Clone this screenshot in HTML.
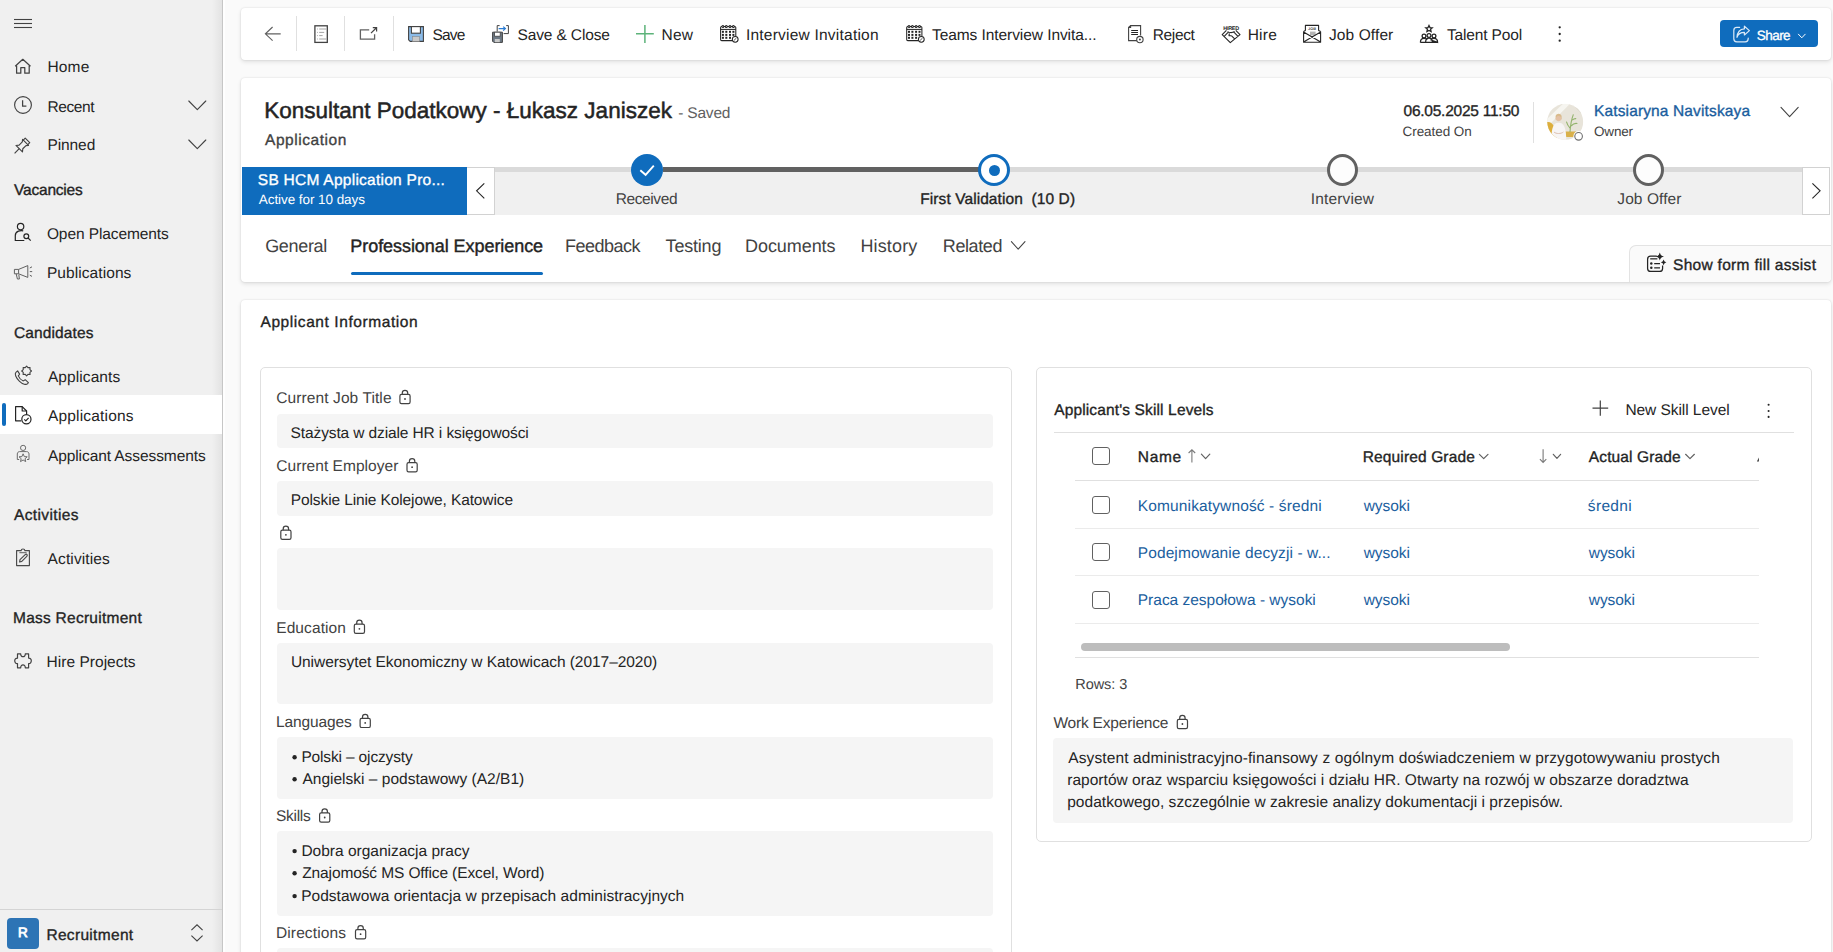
<!DOCTYPE html>
<html><head><meta charset="utf-8"><title>Application</title>
<style>
html,body{margin:0;padding:0}
body{width:1833px;height:952px;overflow:hidden;position:relative;background:#fafafa;font-family:"Liberation Sans",sans-serif;color:#242424;text-rendering:geometricPrecision}
.b{position:absolute}
.t{position:absolute;white-space:pre}
</style></head><body>
<div class="b" style="left:0px;top:0px;width:222px;height:952px;background:#f0f0f0"></div><div class="b" style="left:212px;top:0px;width:10px;height:952px;background:linear-gradient(90deg,rgba(0,0,0,0),rgba(0,0,0,0.055))"></div><div class="b" style="left:222px;top:0px;width:1px;height:952px;background:#c6c6c6"></div><div class="b" style="left:223px;top:0px;width:2px;height:952px;background:#fefefe"></div><div class="b" style="left:0px;top:395px;width:222px;height:39px;background:#ffffff"></div><div class="b" style="left:2px;top:403px;width:4px;height:23px;background:#0f6cbd;border-radius:2px"></div><div class="b" style="left:0px;top:909px;width:222px;height:1px;background:#d4d4d4"></div><div class="b" style="left:7px;top:918px;width:32px;height:31px;background:#2d74b5;border-radius:4px"></div><div class="b" style="left:241px;top:8px;width:1590px;height:52px;background:#fff;border-radius:4px;box-shadow:0 0 2px rgba(0,0,0,0.12),0 2px 4px rgba(0,0,0,0.10)"></div><div class="b" style="left:296px;top:16px;width:1px;height:35px;background:#e0e0e0"></div><div class="b" style="left:344px;top:16px;width:1px;height:35px;background:#e0e0e0"></div><div class="b" style="left:393px;top:16px;width:1px;height:35px;background:#e0e0e0"></div><div class="b" style="left:1720px;top:20px;width:98px;height:27px;background:#0f6cbd;border-radius:4px"></div><div class="b" style="left:241px;top:78px;width:1590px;height:204px;background:#fff;border-radius:4px;box-shadow:0 0 2px rgba(0,0,0,0.12),0 2px 4px rgba(0,0,0,0.10)"></div><div class="b" style="left:242px;top:167px;width:225px;height:48px;background:#0f6cbd"></div><div class="b" style="left:467px;top:167px;width:28px;height:48px;background:#fff;border:1px solid #d2d2d2;border-left:none;box-sizing:border-box"></div><div class="b" style="left:495px;top:167px;width:1307px;height:48px;background:#f0f0f0"></div><div class="b" style="left:495px;top:167px;width:1307px;height:5px;background:#dadada"></div><div class="b" style="left:663px;top:167px;width:316px;height:5px;background:#616161"></div><div class="b" style="left:1802px;top:167px;width:28px;height:48px;background:#fff;border:1px solid #d2d2d2;box-sizing:border-box"></div><div class="b" style="left:1533px;top:102px;width:1px;height:41px;background:#e0e0e0"></div><div class="b" style="left:631px;top:154px;width:32px;height:32px;background:#0f6cbd;border-radius:50%"></div><div class="b" style="left:978px;top:154px;width:32px;height:32px;background:#fff;border:3.7px solid #0f6cbd;border-radius:50%;box-sizing:border-box"></div><div class="b" style="left:988.5px;top:164.5px;width:11.0px;height:11.0px;background:#0f6cbd;border-radius:50%"></div><div class="b" style="left:1327px;top:154px;width:31px;height:32px;background:#fdfdfd;border:3.5px solid #616161;border-radius:50%;box-sizing:border-box"></div><div class="b" style="left:1633px;top:154px;width:31px;height:32px;background:#fdfdfd;border:3.5px solid #616161;border-radius:50%;box-sizing:border-box"></div><div class="b" style="left:351px;top:272px;width:192px;height:3px;background:#0f6cbd;border-radius:2px"></div><div class="b" style="left:1629px;top:245px;width:202px;height:37px;background:#fafafa;border:1px solid #e3e3e3;border-right:none;border-bottom:none;border-top-left-radius:7px;border-bottom-right-radius:5px;box-sizing:border-box"></div><div class="b" style="left:241px;top:300px;width:1590px;height:680px;background:#fff;border-radius:4px;box-shadow:0 0 2px rgba(0,0,0,0.12),0 2px 4px rgba(0,0,0,0.10)"></div><div class="b" style="left:260px;top:367px;width:752px;height:633px;border:1px solid #e0e0e0;border-radius:5px;box-sizing:border-box"></div><div class="b" style="left:277px;top:414px;width:716px;height:34px;background:#f5f5f5;border-radius:4px"></div><div class="b" style="left:277px;top:481px;width:716px;height:35px;background:#f5f5f5;border-radius:4px"></div><div class="b" style="left:277px;top:548px;width:716px;height:62px;background:#f5f5f5;border-radius:4px"></div><div class="b" style="left:277px;top:643px;width:716px;height:61px;background:#f5f5f5;border-radius:4px"></div><div class="b" style="left:277px;top:737px;width:716px;height:62px;background:#f5f5f5;border-radius:4px"></div><div class="b" style="left:277px;top:831px;width:716px;height:85px;background:#f5f5f5;border-radius:4px"></div><div class="b" style="left:277px;top:948px;width:716px;height:52px;background:#f5f5f5;border-radius:4px"></div><div class="b" style="left:1036px;top:367px;width:776px;height:475px;border:1px solid #e0e0e0;border-radius:5px;box-sizing:border-box"></div><div class="b" style="left:1054px;top:432px;width:740px;height:1px;background:#e0e0e0"></div><div class="b" style="left:1075px;top:480px;width:684px;height:1px;background:#e0e0e0"></div><div class="b" style="left:1075px;top:528px;width:684px;height:1px;background:#ebebeb"></div><div class="b" style="left:1075px;top:575px;width:684px;height:1px;background:#ebebeb"></div><div class="b" style="left:1075px;top:623px;width:684px;height:1px;background:#ebebeb"></div><div class="b" style="left:1081px;top:643px;width:429px;height:8px;background:#bdbdbd;border-radius:4px"></div><div class="b" style="left:1075px;top:657px;width:684px;height:1px;background:#e0e0e0"></div><div class="b" style="left:1053px;top:738px;width:740px;height:85px;background:#f5f5f5;border-radius:4px"></div><div class="b" style="left:1092px;top:447px;width:18px;height:18px;border:1px solid #616161;border-radius:3px;box-sizing:border-box;background:#fff"></div><div class="b" style="left:1092px;top:496px;width:18px;height:18px;border:1px solid #616161;border-radius:3px;box-sizing:border-box;background:#fff"></div><div class="b" style="left:1092px;top:543px;width:18px;height:18px;border:1px solid #616161;border-radius:3px;box-sizing:border-box;background:#fff"></div><div class="b" style="left:1092px;top:591px;width:18px;height:18px;border:1px solid #616161;border-radius:3px;box-sizing:border-box;background:#fff"></div>
<svg class="b" style="left:0;top:0" width="1833" height="952" viewBox="0 0 1833 952"><path d="M14 19.5 H32" stroke="#424242" stroke-width="1.1"/><path d="M14 23.5 H32" stroke="#424242" stroke-width="1.1"/><path d="M14 27.5 H32" stroke="#424242" stroke-width="1.1"/><path d="M15.2 66.2 L22.8 59.3 L30.5 66.2 M16.6 64.8 V73.2 H20.8 V67.6 H24.8 V73.2 H29.2 V64.8" stroke="#424242" stroke-width="1.25" fill="none" stroke-linejoin="round"/><circle cx="23" cy="105" r="8.4" stroke="#424242" stroke-width="1.15" fill="none"/><path d="M22.6 100.3 V106.2 H26.4" stroke="#424242" stroke-width="1.25" fill="none"/><g transform="translate(14.6,153.3) rotate(-45)" stroke="#424242" stroke-width="1.15" fill="none" stroke-linejoin="round"><path d="M0 0 H6.5"/><path d="M6.5 -4.6 V4.6 L9 2.6 H13.5 L15.5 4.2 V-4.2 L13.5 -2.6 H9 Z"/><path d="M15.5 -3.2 H18.2 V3.2 H15.5"/></g><path d="M188.8 101 L197.3 109.6 L205.8 101" stroke="#424242" stroke-width="1.1" fill="none" stroke-linecap="round" stroke-linejoin="round"/><path d="M188.8 140 L197.3 148.6 L205.8 140" stroke="#424242" stroke-width="1.1" fill="none" stroke-linecap="round" stroke-linejoin="round"/><g stroke="#242424" stroke-width="1.2" fill="none"><circle cx="20.6" cy="226.6" r="3.2"/><path d="M23.2 230.9 C21 230.4 15.3 230.6 15.3 235.6 V240.5 H24.3"/><circle cx="26.3" cy="236.2" r="2.4"/><path d="M28.1 238 L30.7 240.6"/></g><g stroke="#616161" stroke-width="1" fill="none" stroke-linejoin="round"><rect x="14.4" y="269.4" width="4.2" height="4.4"/><path d="M18.6 269.4 L27.8 265.6 V277.4 L18.6 273.8"/><path d="M16.2 273.8 L17.4 279 H19.4 L18.8 274.6"/><path d="M29.8 268 L32 266.8 M29.8 271.6 H32.2 M29.8 275.2 L32 276.4"/></g><g stroke="#424242" stroke-width="1.1" fill="none" stroke-linejoin="round"><path d="M17.6 370.9 L15.9 372.3 C14.4 373.8 15.8 377.6 19.3 381.1 C22.8 384.6 26.4 385 27.6 383.6 L28.4 382.6 L25.2 379.7 L23.3 380.9 C21.6 380.2 18.9 377.5 18.3 375.9 L19.6 374.1 Z"/><polygon points="31.50,371.00 29.93,372.38 30.06,374.46 27.98,374.33 26.60,375.90 25.22,374.33 23.14,374.46 23.27,372.38 21.70,371.00 23.27,369.62 23.14,367.54 25.22,367.67 26.60,366.10 27.98,367.67 30.06,367.54 29.93,369.62"/></g><g stroke="#242424" stroke-width="1.2" fill="none" stroke-linejoin="round"><path d="M21.3 420.8 H15.6 V406.6 H22.2 L26.6 411 V414.2"/><path d="M22.2 406.6 V411 H26.6"/><circle cx="26.4" cy="419.3" r="4.6"/><path d="M24.3 419.4 L25.8 420.9 L28.6 417.9"/></g><g stroke="#6b6b6b" stroke-width="1" fill="none" stroke-linejoin="round"><circle cx="23.1" cy="447.9" r="2.6"/><path d="M19.6 451.6 H26.6 C28 451.6 29 452.6 29 454 V459.5 H27 M19.2 459.5 H17.3 V454 C17.3 452.6 18.3 451.6 19.6 451.6"/><path d="M23.1 453.8 L24.3 456.6 L27.2 456.8 L25 458.7 L25.7 461.6 L23.1 460 L20.5 461.6 L21.2 458.7 L19 456.8 L21.9 456.6 Z"/></g><g stroke="#4a4a4a" stroke-width="1.15" fill="none" stroke-linejoin="round"><path d="M16.6 550.6 H21.2 C21.2 548.4 24.8 548.4 24.8 550.6 H29.4 V565.6 H16.6 Z"/><path d="M19.4 552.6 H26.6" stroke-width="1.3" stroke="#7a7a7a"/><path d="M19.6 562 L20 559.6 L25.2 554.6 C25.8 554 26.6 554 27 554.6 C27.4 555.2 27.4 555.8 26.8 556.4 L21.8 561.4 Z"/></g><path d="M17.5 653.9 H20.7 C20.5 657.6 25.5 657.6 25.3 653.9 H28.6 V658.1 C32.2 657.9 32.2 663.8 28.6 663.6 V667.8 H25.3 C25.5 663.9 20.5 663.9 20.7 667.8 H17.5 V663.6 C13.8 663.8 13.8 657.9 17.5 658.1 Z" stroke="#424242" stroke-width="1.2" fill="none" stroke-linejoin="round"/><path d="M191.4 930.2 L197 924.8 L202.6 930.2 M191.4 935.6 L197 941 L202.6 935.6" stroke="#424242" stroke-width="1.1" fill="none"/><path d="M272.6 27 L265.4 33.8 L272.6 40.6 M265.6 33.8 H280.7" stroke="#616161" stroke-width="1.15" fill="none"/><rect x="314.9" y="25.8" width="12.4" height="16.6" stroke="#424242" stroke-width="1.3" fill="#fff"/><path d="M317.2 29 H318 M319.2 29 H326.2" stroke="#9a9a9a" stroke-width="0.9"/><path d="M317.2 32.4 H318 M319.2 32.4 H324.2" stroke="#9a9a9a" stroke-width="0.9"/><path d="M317.2 35.6 H318 M319.2 35.6 H322.59999999999997" stroke="#9a9a9a" stroke-width="0.9"/><path d="M317.2 39 H318 M319.2 39 H326.2" stroke="#9a9a9a" stroke-width="0.9"/><path d="M369.2 29.9 H360.4 V39.2 H374.6 V34.2" stroke="#616161" stroke-width="1.3" fill="none"/><path d="M371 33.2 L376.2 28 M372.8 27.6 H376.6 V31.4" stroke="#424242" stroke-width="1.2" fill="none"/><path d="M408.6 26.6 H423.4 V41.4 H410.2 L408.6 39.8 Z" fill="#8bbbe8" stroke="#424242" stroke-width="1.1"/><rect x="411.4" y="26.6" width="9" height="6.6" fill="#fff" stroke="#424242" stroke-width="1.1"/><rect x="412.4" y="36.6" width="7.2" height="4.8" fill="#c9c9c9" stroke="#8a8a8a" stroke-width="0.6"/><path d="M492.6 32.2 H502.4 V42.4 H493.8 L492.6 41.2 Z" fill="#6e7a86" stroke="#424242" stroke-width="1"/><rect x="494.6" y="32.2" width="5.6" height="4" fill="#fff" stroke="#424242" stroke-width="0.8"/><rect x="494.8" y="39" width="5" height="3.2" fill="#c9c9c9"/><path d="M497.2 31.5 V25.6 H499.6 M506.2 25.6 H508.4 V33.6 H503.6" stroke="#424242" stroke-width="1" fill="none"/><path d="M498.6 28.6 H505.2 M503.2 26.6 L505.4 28.6 L503.2 30.6" stroke="#2b7cd3" stroke-width="1.2" fill="none"/><path d="M644.9 25 V42.9 M636 33.8 H653.8" stroke="#5db37a" stroke-width="1.5"/><g transform="translate(720.1,25.9)" fill="none" stroke="#242424" stroke-width="1.05"><path d="M12.2 14.7 H1.6 C0.9 14.7 0.5 14.3 0.5 13.6 V1.6 C0.5 0.9 0.9 0.5 1.6 0.5 H14.6 C15.3 0.5 15.7 0.9 15.7 1.6 V10.6"/><path d="M0.5 3.5 H15.7"/><circle cx="2.8" cy="0.6" r="1" fill="#fff"/><circle cx="6.2" cy="0.6" r="1" fill="#fff"/><circle cx="9.9" cy="0.6" r="1" fill="#fff"/><circle cx="13.3" cy="0.6" r="1" fill="#fff"/><rect x="1.7999999999999998" y="4.9" width="2" height="2" fill="#242424" stroke="none"/><rect x="5.2" y="4.9" width="2" height="2" fill="#242424" stroke="none"/><rect x="8.9" y="4.9" width="2" height="2" fill="#242424" stroke="none"/><rect x="12.3" y="4.9" width="2" height="2" fill="#242424" stroke="none"/><rect x="1.7999999999999998" y="8.0" width="2" height="2" fill="#242424" stroke="none"/><rect x="5.2" y="8.0" width="2" height="2" fill="#242424" stroke="none"/><rect x="8.9" y="8.0" width="2" height="2" fill="#242424" stroke="none"/><rect x="12.3" y="8.0" width="2" height="2" fill="#242424" stroke="none"/><rect x="1.7999999999999998" y="10.9" width="2" height="2" fill="#242424" stroke="none"/><rect x="5.2" y="10.9" width="2" height="2" fill="#242424" stroke="none"/><rect x="8.9" y="10.9" width="2" height="2" fill="#242424" stroke="none"/><circle cx="15.1" cy="13.4" r="2.9" fill="#fff"/><path d="M13.9 14.5 L16.3 12.2" stroke-width="0.8"/></g><g transform="translate(906.2,25.9)" fill="none" stroke="#242424" stroke-width="1.05"><path d="M12.2 14.7 H1.6 C0.9 14.7 0.5 14.3 0.5 13.6 V1.6 C0.5 0.9 0.9 0.5 1.6 0.5 H14.6 C15.3 0.5 15.7 0.9 15.7 1.6 V10.6"/><path d="M0.5 3.5 H15.7"/><circle cx="2.8" cy="0.6" r="1" fill="#fff"/><circle cx="6.2" cy="0.6" r="1" fill="#fff"/><circle cx="9.9" cy="0.6" r="1" fill="#fff"/><circle cx="13.3" cy="0.6" r="1" fill="#fff"/><rect x="1.7999999999999998" y="4.9" width="2" height="2" fill="#242424" stroke="none"/><rect x="5.2" y="4.9" width="2" height="2" fill="#242424" stroke="none"/><rect x="8.9" y="4.9" width="2" height="2" fill="#242424" stroke="none"/><rect x="12.3" y="4.9" width="2" height="2" fill="#242424" stroke="none"/><rect x="1.7999999999999998" y="8.0" width="2" height="2" fill="#242424" stroke="none"/><rect x="5.2" y="8.0" width="2" height="2" fill="#242424" stroke="none"/><rect x="8.9" y="8.0" width="2" height="2" fill="#242424" stroke="none"/><rect x="12.3" y="8.0" width="2" height="2" fill="#242424" stroke="none"/><rect x="1.7999999999999998" y="10.9" width="2" height="2" fill="#242424" stroke="none"/><rect x="5.2" y="10.9" width="2" height="2" fill="#242424" stroke="none"/><rect x="8.9" y="10.9" width="2" height="2" fill="#242424" stroke="none"/><circle cx="15.1" cy="13.4" r="2.9" fill="#fff"/><path d="M13.9 14.5 L16.3 12.2" stroke-width="0.8"/></g><g fill="none" stroke="#424242" stroke-width="1.1"><path d="M1137.2 40.6 H1128.6 V27.4 L1130.6 25.6 H1140.6 V35.6"/><path d="M1128.6 27.4 H1130.6 V25.6"/><path d="M1131.2 30.5 H1138 M1131.2 32.5 H1138 M1131.2 34.5 H1138" stroke-width="1.2" stroke="#242424"/><circle cx="1139.9" cy="39.6" r="3.2" fill="#fff"/><circle cx="1139.9" cy="39.6" r="1" fill="#424242" stroke="none"/></g><g fill="none" stroke="#242424" stroke-width="1.1" stroke-linejoin="round"><text x="1231.1" y="29.7" font-size="5.4" font-family="Liberation Sans" font-weight="700" text-anchor="middle" fill="#242424" stroke="none" letter-spacing="-0.25">HIRED</text><path d="M1226.4 30.4 L1222.2 34.6 L1230.3 42.6 L1240 34.6 L1235.8 30.4 M1224.2 36.4 L1228.3 32.2 M1238 36.4 L1233.9 32.2 M1227.6 31.6 Q1231 33.6 1234.6 31.6 M1229.4 33.4 L1229 35.6 L1231.6 35.8 M1231.6 35.8 L1234.4 38.6"/></g><g fill="none" stroke="#242424" stroke-width="1.1" stroke-linejoin="round"><path d="M1305.4 30.8 V25.4 H1318.6 V30.8"/><rect x="1310" y="31.6" width="5.6" height="3.8" fill="#b4b4b4" stroke="none"/><text x="1312" y="29.9" font-size="3.8" font-family="Liberation Sans" font-weight="700" text-anchor="middle" fill="#424242" stroke="none">JOB</text><path d="M1303.6 31.4 V42.2 H1320.6 V31.4 M1303.6 31.4 L1305.4 30.4 M1320.6 31.4 L1318.6 30.4 M1304 32.2 L1320.2 41.8 M1320.2 32.2 L1304 41.8"/></g><g fill="none" stroke="#242424" stroke-width="1.25"><path d="M1429 25.4 L1430 27.6 L1432.3 27.8 L1430.6 29.3 L1431.1 31.6 L1429 30.4 L1426.9 31.6 L1427.4 29.3 L1425.7 27.8 L1428 27.6 Z"/><circle cx="1424" cy="36" r="1.9"/><circle cx="1429" cy="35.6" r="1.9"/><circle cx="1434" cy="36" r="1.9"/><path d="M1420.4 42.4 C1420.4 39.6 1421.8 38.4 1424 38.4 C1425.6 38.4 1426.6 39 1427 40 M1431 40 C1431.4 39 1432.4 38.4 1434 38.4 C1436.2 38.4 1437.6 39.6 1437.6 42.4 Z M1425.6 42.4 C1425.6 39.4 1427 38 1429 38 C1431 38 1432.4 39.4 1432.4 42.4 M1420.4 42.4 H1437.6"/></g><circle cx="1559.7" cy="27.3" r="1.15" fill="#242424"/><circle cx="1559.7" cy="34" r="1.15" fill="#242424"/><circle cx="1559.7" cy="40.7" r="1.15" fill="#242424"/><g fill="none" stroke="#dbe9f7" stroke-width="1.2" stroke-linejoin="round" stroke-linecap="round"><path d="M1739.6 27.4 H1736.8 C1735 27.4 1733.8 28.6 1733.8 30.4 V38.8 C1733.8 40.6 1735 41.8 1736.8 41.8 H1745.2 C1747 41.8 1748.2 40.6 1748.2 38.8 V38"/><path d="M1737 37.4 C1738.1 33.8 1740.8 32.4 1744.4 32.4 V35 L1749.4 30.6 L1744.4 26.2 V28.8 C1740.2 29 1737.3 32.2 1737 37.4 Z"/></g><path d="M1798.4 34.2 L1801.8000000000002 37.8 L1805.2 34.2" stroke="#ffffff" stroke-width="1" fill="none" stroke-linecap="round" stroke-linejoin="round"/><path d="M484.3 183.3 L476.6 190.8 L484.3 198.3" stroke="#242424" stroke-width="1.1" fill="none"/><path d="M1812.4 183.3 L1820.1 190.8 L1812.4 198.3" stroke="#242424" stroke-width="1.1" fill="none"/><path d="M640.3 170.2 L645.6 174.8 L653.8 165.6" stroke="#fff" stroke-width="1.9" fill="none"/><path d="M1781 107.4 L1789.6 116.6 L1798.2 107.4" stroke="#424242" stroke-width="1.1" fill="none" stroke-linecap="round" stroke-linejoin="round"/><path d="M1011.4 241.6 L1018.2 249.2 L1025 241.6" stroke="#424242" stroke-width="1.05" fill="none" stroke-linecap="round" stroke-linejoin="round"/><defs><clipPath id="av"><circle cx="1565.2" cy="121.8" r="18"/></clipPath></defs><g clip-path="url(#av)"><rect x="1547" y="103.8" width="36.4" height="36.4" fill="#e8e4da"/><path d="M1572 103.8 L1583.4 116 V103.8 Z" fill="#dcd8cc"/><path d="M1563 103.8 L1570 103.8 L1547 127 V119 Z" fill="#f6f5f0"/><path d="M1547 122 C1553 121 1556 128 1557 140.2 H1547 Z" fill="#dcae3c"/><path d="M1565 131.5 H1576 L1574.6 137 H1566.2 Z" fill="#d9b04a"/><path d="M1570 132 C1570.4 125 1571.6 119 1573.4 114.4 M1571 126 C1573.6 123.4 1575.8 123 1577.4 123.6 M1570.4 128.6 C1568.2 126.2 1567 124 1566.4 121.6 M1572.2 120.2 C1574 118.6 1575.4 118.4 1576.2 118.8" stroke="#93b36c" stroke-width="1.1" fill="none"/><path d="M1555.6 116.6 C1555.6 112.8 1561.6 112.8 1561.6 116.6 V119.4 H1555.6 Z" fill="#d9bb8c"/><circle cx="1558.6" cy="118.6" r="2.6" fill="#e4c1a5"/><path d="M1551.4 140.2 C1551.4 127 1553.6 122.8 1558.6 122.8 C1563.6 122.8 1566.2 127 1566.2 140.2 Z" fill="#f7f5f5"/><path d="M1554 132 C1556 134 1561 134 1563.4 132" stroke="#dcbfae" stroke-width="1" fill="none"/></g><circle cx="1578.6" cy="136.3" r="5.2" fill="#fff"/><circle cx="1578.6" cy="136.3" r="3.8" fill="#fff" stroke="#6e6e6e" stroke-width="1.1"/><g fill="none" stroke="#242424" stroke-width="1.25"><path d="M1656.8 256.2 H1650.6 C1648.8 256.2 1647.6 257.4 1647.6 259.2 V268.4 C1647.6 270.2 1648.8 271.4 1650.6 271.4 H1659.6 C1661.4 271.4 1662.6 270.2 1662.6 268.4 V265.6"/><path d="M1650.2 258.8 H1657.4" stroke-width="1.6" stroke="#555"/><path d="M1654.2 263.6 H1660 M1654.2 267.8 H1660"/></g><circle cx="1651.3" cy="263.6" r="1.25" fill="#242424"/><circle cx="1651.3" cy="267.8" r="1.25" fill="#242424"/><path d="M1659.8 252.6 Q1660.5 256 1664 256.6 Q1660.5 257.2 1659.8 260.6 Q1659.1 257.2 1655.6 256.6 Q1659.1 256 1659.8 252.6 Z" fill="#242424"/><path d="M1663.6 259.4 Q1664.1 261.9 1666.4 262.3 Q1664.1 262.7 1663.6 265.2 Q1663.1 262.7 1660.8 262.3 Q1663.1 261.9 1663.6 259.4 Z" fill="#242424"/><g transform="translate(399.3,389.8)" stroke="#424242" stroke-width="1.2" fill="none"><rect x="0.6" y="4.6" width="10.2" height="9.2" rx="1.6"/><path d="M3.0 4.6 V3.3 A2.7 2.7 0 0 1 8.4 3.3 V4.6"/><circle cx="5.7" cy="9.2" r="0.9" fill="#424242" stroke="none"/></g><g transform="translate(406.4,458.0)" stroke="#424242" stroke-width="1.2" fill="none"><rect x="0.6" y="4.6" width="10.2" height="9.2" rx="1.6"/><path d="M3.0 4.6 V3.3 A2.7 2.7 0 0 1 8.4 3.3 V4.6"/><circle cx="5.7" cy="9.2" r="0.9" fill="#424242" stroke="none"/></g><g transform="translate(280.2,525.6)" stroke="#424242" stroke-width="1.2" fill="none"><rect x="0.6" y="4.6" width="10.2" height="9.2" rx="1.6"/><path d="M3.0 4.6 V3.3 A2.7 2.7 0 0 1 8.4 3.3 V4.6"/><circle cx="5.7" cy="9.2" r="0.9" fill="#424242" stroke="none"/></g><g transform="translate(353.7,619.6)" stroke="#424242" stroke-width="1.2" fill="none"><rect x="0.6" y="4.6" width="10.2" height="9.2" rx="1.6"/><path d="M3.0 4.6 V3.3 A2.7 2.7 0 0 1 8.4 3.3 V4.6"/><circle cx="5.7" cy="9.2" r="0.9" fill="#424242" stroke="none"/></g><g transform="translate(359.5,713.7)" stroke="#424242" stroke-width="1.2" fill="none"><rect x="0.6" y="4.6" width="10.2" height="9.2" rx="1.6"/><path d="M3.0 4.6 V3.3 A2.7 2.7 0 0 1 8.4 3.3 V4.6"/><circle cx="5.7" cy="9.2" r="0.9" fill="#424242" stroke="none"/></g><g transform="translate(319.0,808.3)" stroke="#424242" stroke-width="1.2" fill="none"><rect x="0.6" y="4.6" width="10.2" height="9.2" rx="1.6"/><path d="M3.0 4.6 V3.3 A2.7 2.7 0 0 1 8.4 3.3 V4.6"/><circle cx="5.7" cy="9.2" r="0.9" fill="#424242" stroke="none"/></g><g transform="translate(354.9,925.0)" stroke="#424242" stroke-width="1.2" fill="none"><rect x="0.6" y="4.6" width="10.2" height="9.2" rx="1.6"/><path d="M3.0 4.6 V3.3 A2.7 2.7 0 0 1 8.4 3.3 V4.6"/><circle cx="5.7" cy="9.2" r="0.9" fill="#424242" stroke="none"/></g><g transform="translate(1176.7,714.8)" stroke="#424242" stroke-width="1.2" fill="none"><rect x="0.6" y="4.6" width="10.2" height="9.2" rx="1.6"/><path d="M3.0 4.6 V3.3 A2.7 2.7 0 0 1 8.4 3.3 V4.6"/><circle cx="5.7" cy="9.2" r="0.9" fill="#424242" stroke="none"/></g><circle cx="294.6" cy="757.3" r="2.2" fill="#242424"/><circle cx="294.6" cy="779.3" r="2.2" fill="#242424"/><circle cx="294.6" cy="851.1" r="2.2" fill="#242424"/><circle cx="294.6" cy="873.3" r="2.2" fill="#242424"/><circle cx="294.6" cy="896.1" r="2.2" fill="#242424"/><path d="M1600.3 400.4 V415.8 M1592.5 408.1 H1608.2" stroke="#424242" stroke-width="1.2"/><circle cx="1768.6" cy="404.8" r="1.05" fill="#242424"/><circle cx="1768.6" cy="411" r="1.05" fill="#242424"/><circle cx="1768.6" cy="416.9" r="1.05" fill="#242424"/><path d="M1191.9 450.2 V462.6 M1188.6 453 L1191.9 449.8 L1195.2 453" stroke="#7a7a7a" stroke-width="1.1" fill="none"/><path d="M1201.4 454.2 L1205.6 458.6 L1209.8 454.2" stroke="#616161" stroke-width="1.2" fill="none" stroke-linecap="round" stroke-linejoin="round"/><path d="M1543.1 449.2 V462 M1539.9 459.2 L1543.1 462.4 L1546.3 459.2" stroke="#7a7a7a" stroke-width="1.1" fill="none"/><path d="M1553.3 454.3 L1556.9499999999998 458.3 L1560.6 454.3" stroke="#616161" stroke-width="1.2" fill="none" stroke-linecap="round" stroke-linejoin="round"/><path d="M1479.4 454.3 L1483.7 458.6 L1488 454.3" stroke="#616161" stroke-width="1.2" fill="none" stroke-linecap="round" stroke-linejoin="round"/><path d="M1685.6 454.3 L1690.0 458.6 L1694.4 454.3" stroke="#616161" stroke-width="1.2" fill="none" stroke-linecap="round" stroke-linejoin="round"/><path d="M1758.8 457.4 L1757 461.6 H1758.8 Z" fill="#242424"/></svg>
<div class="t" style="left:47.4px;top:60.3px;font-size:15.5px;line-height:15.5px;color:#242424;letter-spacing:0.200px">Home</div>
<div class="t" style="left:47.4px;top:99.8px;font-size:15.5px;line-height:15.5px;color:#242424;letter-spacing:-0.380px">Recent</div>
<div class="t" style="left:47.4px;top:138.4px;font-size:15.5px;line-height:15.5px;color:#242424;letter-spacing:-0.080px">Pinned</div>
<div class="t" style="left:14.0px;top:183.0px;font-size:15.5px;line-height:15.5px;color:#242424;-webkit-text-stroke:0.34px #242424;letter-spacing:-0.200px">Vacancies</div>
<div class="t" style="left:46.9px;top:226.7px;font-size:15.5px;line-height:15.5px;color:#242424;letter-spacing:-0.093px">Open Placements</div>
<div class="t" style="left:46.9px;top:265.6px;font-size:15.5px;line-height:15.5px;color:#242424;letter-spacing:0.082px">Publications</div>
<div class="t" style="left:14.0px;top:325.8px;font-size:15.5px;line-height:15.5px;color:#242424;-webkit-text-stroke:0.34px #242424;letter-spacing:0.111px">Candidates</div>
<div class="t" style="left:47.9px;top:369.7px;font-size:15.5px;line-height:15.5px;color:#242424;letter-spacing:0.089px">Applicants</div>
<div class="t" style="left:47.9px;top:409.0px;font-size:15.5px;line-height:15.5px;color:#242424;letter-spacing:0.191px">Applications</div>
<div class="t" style="left:47.9px;top:448.7px;font-size:15.5px;line-height:15.5px;color:#242424;letter-spacing:-0.075px">Applicant Assessments</div>
<div class="t" style="left:14.0px;top:507.8px;font-size:15.5px;line-height:15.5px;color:#242424;-webkit-text-stroke:0.34px #242424;letter-spacing:0.367px">Activities</div>
<div class="t" style="left:47.6px;top:551.5px;font-size:15.5px;line-height:15.5px;color:#242424;letter-spacing:0.111px">Activities</div>
<div class="t" style="left:13.0px;top:611.4px;font-size:15.5px;line-height:15.5px;color:#242424;-webkit-text-stroke:0.34px #242424;letter-spacing:0.253px">Mass Recruitment</div>
<div class="t" style="left:46.6px;top:655.0px;font-size:15.5px;line-height:15.5px;color:#242424;letter-spacing:0.025px">Hire Projects</div>
<div class="t" style="left:46.4px;top:928.0px;font-size:15.5px;line-height:15.5px;color:#242424;-webkit-text-stroke:0.34px #242424;letter-spacing:0.320px">Recruitment</div>
<div class="t" style="left:18.1px;top:926.0px;font-size:13.5px;line-height:13.5px;color:#ffffff;-webkit-text-stroke:0.81px #ffffff">R</div>
<div class="t" style="left:432.5px;top:28.0px;font-size:15.5px;line-height:15.5px;color:#242424;letter-spacing:-0.833px">Save</div>
<div class="t" style="left:517.6px;top:28.0px;font-size:15.5px;line-height:15.5px;color:#242424;letter-spacing:-0.145px">Save &amp; Close</div>
<div class="t" style="left:661.6px;top:28.0px;font-size:15.5px;line-height:15.5px;color:#242424;letter-spacing:0.200px">New</div>
<div class="t" style="left:745.9px;top:28.0px;font-size:15.5px;line-height:15.5px;color:#242424;letter-spacing:0.226px">Interview Invitation</div>
<div class="t" style="left:932.0px;top:28.0px;font-size:15.5px;line-height:15.5px;color:#242424;letter-spacing:-0.071px">Teams Interview Invita...</div>
<div class="t" style="left:1152.8px;top:28.0px;font-size:15.5px;line-height:15.5px;color:#242424;letter-spacing:-0.380px">Reject</div>
<div class="t" style="left:1247.7px;top:28.0px;font-size:15.5px;line-height:15.5px;color:#242424;letter-spacing:0.233px">Hire</div>
<div class="t" style="left:1329.0px;top:28.0px;font-size:15.5px;line-height:15.5px;color:#242424;letter-spacing:0.100px">Job Offer</div>
<div class="t" style="left:1447.0px;top:28.0px;font-size:15.5px;line-height:15.5px;color:#242424;letter-spacing:-0.160px">Talent Pool</div>
<div class="t" style="left:1756.7px;top:29.0px;font-size:13.5px;line-height:13.5px;color:#ffffff;-webkit-text-stroke:0.30px #ffffff;letter-spacing:-0.525px">Share</div>
<div class="t" style="left:264.2px;top:99.9px;font-size:22.5px;line-height:22.5px;color:#242424;-webkit-text-stroke:0.49px #242424">Konsultant Podatkowy - Łukasz Janiszek</div>
<div class="t" style="left:678.3px;top:106.2px;font-size:15.5px;line-height:15.5px;color:#616161;letter-spacing:-0.217px">- Saved</div>
<div class="t" style="left:265.0px;top:132.8px;font-size:15.5px;line-height:15.5px;color:#424242;-webkit-text-stroke:0.34px #424242;letter-spacing:0.550px">Application</div>
<div class="t" style="left:257.8px;top:172.8px;font-size:15.5px;line-height:15.5px;color:#ffffff;-webkit-text-stroke:0.34px #ffffff;letter-spacing:0.258px">SB HCM Application Pro...</div>
<div class="t" style="left:258.8px;top:193.0px;font-size:13.5px;line-height:13.5px;color:#ffffff;letter-spacing:-0.065px">Active for 10 days</div>
<div class="t" style="left:615.8px;top:191.7px;font-size:15.5px;line-height:15.5px;color:#424242;letter-spacing:-0.414px">Received</div>
<div class="t" style="left:920.3px;top:191.8px;font-size:15.5px;line-height:15.5px;color:#242424;-webkit-text-stroke:0.34px #242424;letter-spacing:0.074px">First Validation  (10 D)</div>
<div class="t" style="left:1310.7px;top:191.9px;font-size:15.5px;line-height:15.5px;color:#424242;letter-spacing:0.162px">Interview</div>
<div class="t" style="left:1617.3px;top:191.6px;font-size:15.5px;line-height:15.5px;color:#424242;letter-spacing:0.088px">Job Offer</div>
<div class="t" style="left:1403.5px;top:103.9px;font-size:15.5px;line-height:15.5px;color:#242424;-webkit-text-stroke:0.34px #242424;letter-spacing:-0.240px">06.05.2025 11:50</div>
<div class="t" style="left:1402.5px;top:124.7px;font-size:13.5px;line-height:13.5px;color:#424242;letter-spacing:-0.056px">Created On</div>
<div class="t" style="left:1594.0px;top:103.9px;font-size:15.5px;line-height:15.5px;color:#1b5e9e;-webkit-text-stroke:0.34px #1b5e9e;letter-spacing:0.135px">Katsiaryna Navitskaya</div>
<div class="t" style="left:1594.0px;top:124.7px;font-size:13.5px;line-height:13.5px;color:#424242;letter-spacing:-0.175px">Owner</div>
<div class="t" style="left:265.2px;top:237.1px;font-size:18px;line-height:18px;color:#424242;letter-spacing:-0.333px">General</div>
<div class="t" style="left:350.3px;top:237.1px;font-size:18px;line-height:18px;color:#242424;-webkit-text-stroke:0.40px #242424;letter-spacing:-0.059px">Professional Experience</div>
<div class="t" style="left:565.0px;top:237.1px;font-size:18px;line-height:18px;color:#424242;letter-spacing:-0.500px">Feedback</div>
<div class="t" style="left:665.6px;top:237.1px;font-size:18px;line-height:18px;color:#424242;letter-spacing:-0.200px">Testing</div>
<div class="t" style="left:745.0px;top:237.1px;font-size:18px;line-height:18px;color:#424242;letter-spacing:-0.062px">Documents</div>
<div class="t" style="left:860.4px;top:237.1px;font-size:18px;line-height:18px;color:#424242;letter-spacing:0.150px">History</div>
<div class="t" style="left:942.8px;top:237.1px;font-size:18px;line-height:18px;color:#424242;letter-spacing:-0.400px">Related</div>
<div class="t" style="left:1673.0px;top:257.8px;font-size:15.5px;line-height:15.5px;color:#242424;-webkit-text-stroke:0.34px #242424;letter-spacing:0.300px">Show form fill assist</div>
<div class="t" style="left:260.5px;top:315.0px;font-size:15.5px;line-height:15.5px;color:#242424;-webkit-text-stroke:0.34px #242424;letter-spacing:0.575px">Applicant Information</div>
<div class="t" style="left:276.3px;top:390.8px;font-size:15.5px;line-height:15.5px;color:#424242;letter-spacing:0.094px">Current Job Title</div>
<div class="t" style="left:290.6px;top:426.0px;font-size:15.5px;line-height:15.5px;color:#242424;letter-spacing:-0.118px">Stażysta w dziale HR i księgowości</div>
<div class="t" style="left:276.3px;top:459.0px;font-size:15.5px;line-height:15.5px;color:#424242;letter-spacing:0.040px">Current Employer</div>
<div class="t" style="left:290.8px;top:493.0px;font-size:15.5px;line-height:15.5px;color:#242424;letter-spacing:-0.113px">Polskie Linie Kolejowe, Katowice</div>
<div class="t" style="left:276.2px;top:620.6px;font-size:15.5px;line-height:15.5px;color:#424242;letter-spacing:0.100px">Education</div>
<div class="t" style="left:290.9px;top:655.0px;font-size:15.5px;line-height:15.5px;color:#242424;letter-spacing:-0.053px">Uniwersytet Ekonomiczny w Katowicach (2017–2020)</div>
<div class="t" style="left:276.0px;top:714.7px;font-size:15.5px;line-height:15.5px;color:#424242;letter-spacing:-0.125px">Languages</div>
<div class="t" style="left:301.4px;top:749.8px;font-size:15.5px;line-height:15.5px;color:#242424;letter-spacing:-0.150px">Polski – ojczysty</div>
<div class="t" style="left:302.4px;top:771.8px;font-size:15.5px;line-height:15.5px;color:#242424;letter-spacing:0.014px">Angielski – podstawowy (A2/B1)</div>
<div class="t" style="left:276.0px;top:809.3px;font-size:15.5px;line-height:15.5px;color:#424242;letter-spacing:-0.280px">Skills</div>
<div class="t" style="left:301.4px;top:843.6px;font-size:15.5px;line-height:15.5px;color:#242424">Dobra organizacja pracy</div>
<div class="t" style="left:302.2px;top:866.3px;font-size:15.5px;line-height:15.5px;color:#242424;letter-spacing:-0.112px">Znajomość MS Office (Excel, Word)</div>
<div class="t" style="left:301.2px;top:888.9px;font-size:15.5px;line-height:15.5px;color:#242424;letter-spacing:0.027px">Podstawowa orientacja w przepisach administracyjnych</div>
<div class="t" style="left:276.0px;top:926.0px;font-size:15.5px;line-height:15.5px;color:#424242;letter-spacing:0.111px">Directions</div>
<div class="t" style="left:1054.2px;top:403.3px;font-size:15.5px;line-height:15.5px;color:#242424;-webkit-text-stroke:0.34px #242424;letter-spacing:0.135px">Applicant&#x27;s Skill Levels</div>
<div class="t" style="left:1625.4px;top:403.0px;font-size:15.5px;line-height:15.5px;color:#242424;letter-spacing:-0.057px">New Skill Level</div>
<div class="t" style="left:1137.8px;top:450.1px;font-size:15.5px;line-height:15.5px;color:#242424;-webkit-text-stroke:0.34px #242424;letter-spacing:0.667px">Name</div>
<div class="t" style="left:1362.7px;top:449.5px;font-size:15.5px;line-height:15.5px;color:#242424;-webkit-text-stroke:0.34px #242424;letter-spacing:0.138px">Required Grade</div>
<div class="t" style="left:1588.8px;top:449.5px;font-size:15.5px;line-height:15.5px;color:#242424;-webkit-text-stroke:0.34px #242424;letter-spacing:0.127px">Actual Grade</div>
<div class="t" style="left:1137.8px;top:499.4px;font-size:15.5px;line-height:15.5px;color:#1b5e9e;letter-spacing:0.130px">Komunikatywność - średni</div>
<div class="t" style="left:1363.7px;top:499.4px;font-size:15.5px;line-height:15.5px;color:#1b5e9e;letter-spacing:-0.060px">wysoki</div>
<div class="t" style="left:1587.8px;top:499.4px;font-size:15.5px;line-height:15.5px;color:#1b5e9e;letter-spacing:0.340px">średni</div>
<div class="t" style="left:1137.8px;top:545.7px;font-size:15.5px;line-height:15.5px;color:#1b5e9e;letter-spacing:0.092px">Podejmowanie decyzji - w...</div>
<div class="t" style="left:1363.7px;top:545.7px;font-size:15.5px;line-height:15.5px;color:#1b5e9e;letter-spacing:-0.060px">wysoki</div>
<div class="t" style="left:1588.8px;top:545.7px;font-size:15.5px;line-height:15.5px;color:#1b5e9e;letter-spacing:-0.060px">wysoki</div>
<div class="t" style="left:1137.8px;top:593.4px;font-size:15.5px;line-height:15.5px;color:#1b5e9e;letter-spacing:-0.013px">Praca zespołowa - wysoki</div>
<div class="t" style="left:1363.7px;top:593.4px;font-size:15.5px;line-height:15.5px;color:#1b5e9e;letter-spacing:-0.060px">wysoki</div>
<div class="t" style="left:1588.8px;top:593.4px;font-size:15.5px;line-height:15.5px;color:#1b5e9e;letter-spacing:-0.060px">wysoki</div>
<div class="t" style="left:1075.2px;top:677.5px;font-size:14.5px;line-height:14.5px;color:#424242;letter-spacing:-0.033px">Rows: 3</div>
<div class="t" style="left:1053.4px;top:715.8px;font-size:15.5px;line-height:15.5px;color:#424242;letter-spacing:-0.193px">Work Experience</div>
<div class="t" style="left:1068.2px;top:750.7px;font-size:15.5px;line-height:15.5px;color:#242424;letter-spacing:0.126px">Asystent administracyjno-finansowy z ogólnym doświadczeniem w przygotowywaniu prostych</div>
<div class="t" style="left:1067.2px;top:772.8px;font-size:15.5px;line-height:15.5px;color:#242424;letter-spacing:0.035px">raportów oraz wsparciu księgowości i działu HR. Otwarty na rozwój w obszarze doradztwa</div>
<div class="t" style="left:1067.2px;top:795.2px;font-size:15.5px;line-height:15.5px;color:#242424;letter-spacing:0.044px">podatkowego, szczególnie w zakresie analizy dokumentacji i przepisów.</div>
</body></html>
